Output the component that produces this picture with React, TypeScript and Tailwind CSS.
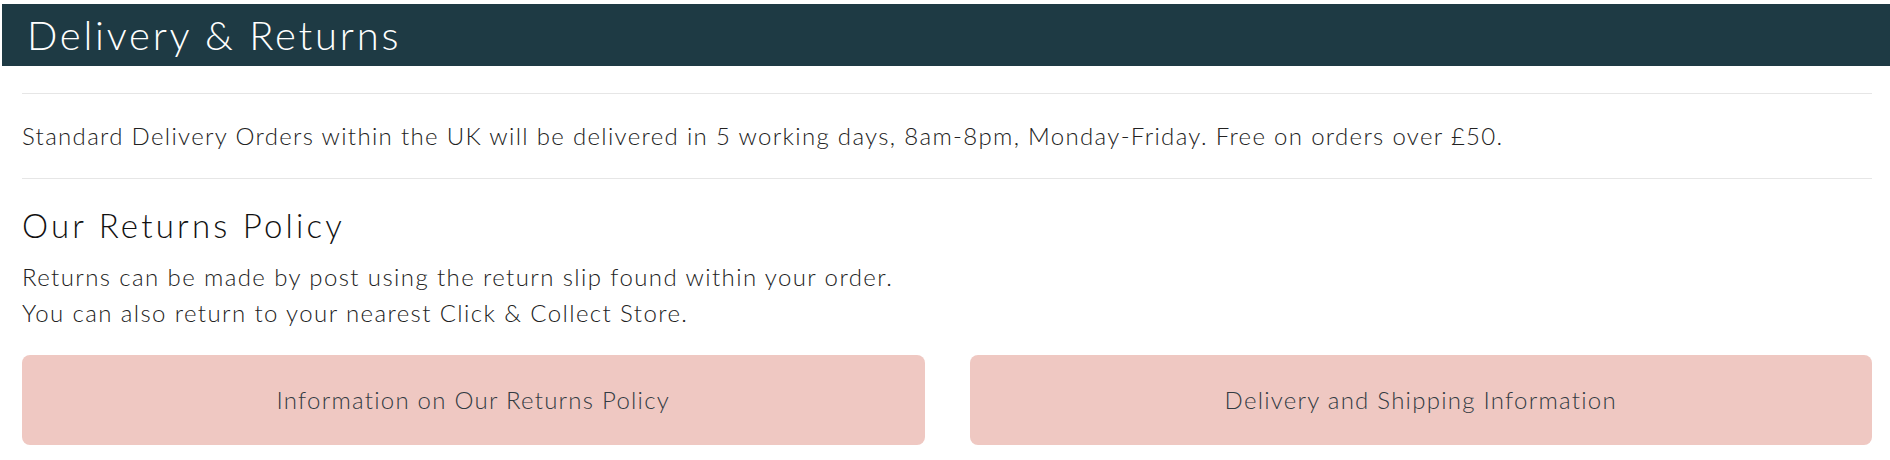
import React from 'react';

// Simple static info block: delivery note + returns policy with two link buttons
const links = ['Information on Our Returns Policy', 'Delivery and Shipping Information'];

const App: React.FC = () => {
  return (
    <div className="min-h-[460px] bg-white pt-[4px] pl-[2px] font-['Lato',sans-serif] font-light text-[#222222]">
      {/* Page title bar */}
      <div className="flex h-[62px] items-center bg-[#1e3a44] px-[25px]">
        <h1 className="text-[40px] leading-none tracking-[2.75px] text-white">Delivery &amp; Returns</h1>
      </div>

      <div className="pl-[20px] pr-[18px]">
        <p className="mt-[27px] border-y border-[#e6e6e6] py-[24px] text-[24px] leading-[36px] tracking-[1.32px]">
          Standard Delivery Orders within the UK will be delivered in 5 working days, 8am-8pm, Monday-Friday. Free on orders over £50.
        </p>

        <h2 className="mt-[26px] text-[33px] leading-[40px] tracking-[3.2px] text-[#111111]">Our Returns Policy</h2>
        <p className="mt-[14px] text-[24px] leading-[36px] tracking-[1.4px]">
          Returns can be made by post using the return slip found within your order.
          <br />
          You can also return to your nearest Click &amp; Collect Store.
        </p>

        {/* Link buttons */}
        <div className="mt-[24px] grid grid-cols-2 gap-[45px]">
          {links.map((label) => (
            <a
              key={label}
              href="#"
              className="flex h-[90px] items-center justify-center rounded-lg bg-[#efc8c2] text-[24px] tracking-[1.25px] text-[#333b42]"
            >
              {label}
            </a>
          ))}
        </div>
      </div>
    </div>
  );
};

export default App;
